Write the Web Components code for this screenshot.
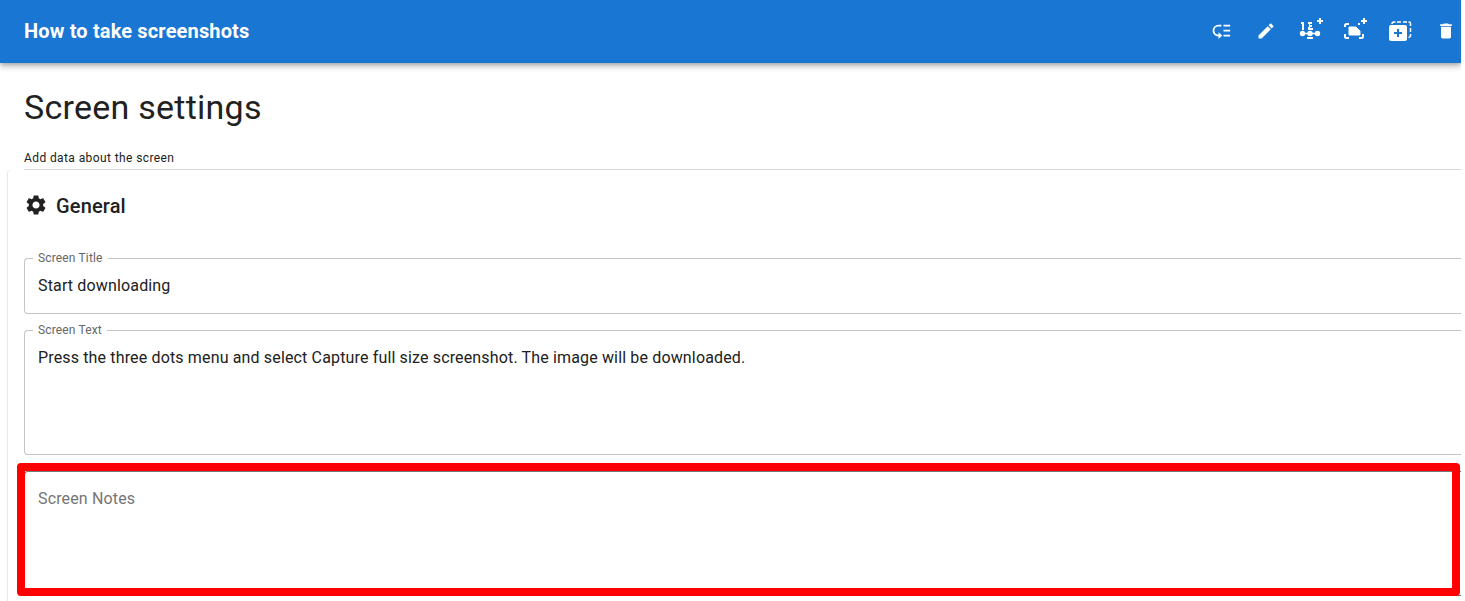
<!DOCTYPE html>
<html lang="en">
<head>
<meta charset="utf-8">
<title>How to take screenshots</title>
<style>
html, body { margin: 0; height: 100%; }
body { font-family: Roboto, sans-serif; color: #212121; background: #fff; overflow: hidden; }
</style>
</head>
<body>
<screen-editor></screen-editor>
<script>
const define = (name, html, setup) => customElements.define(name, class extends HTMLElement {
  connectedCallback() {
    if (this.shadowRoot) return;
    const t = document.createElement('template');
    t.innerHTML = html;
    this.attachShadow({ mode: 'open' }).append(t.content.cloneNode(true));
    if (setup) setup(this, this.shadowRoot);
  }
});

define('icon-button', `
<style>
:host { display: block; }
button { display: grid; place-items: center; width: 24px; height: 24px; padding: 0; border: 0; background: none; color: inherit; cursor: pointer; }
::slotted(svg) { display: block; width: 24px; height: 24px; fill: currentColor; overflow: visible; }
:host([small]) ::slotted(svg) { width: 20px; height: 20px; }
</style>
<button type="button"><slot></slot></button>`, (el, root) => {
  root.querySelector('button').setAttribute('aria-label', el.getAttribute('label'));
});

define('app-bar', `
<style>
:host { display: flex; align-items: center; justify-content: space-between; height: 63px; box-sizing: border-box; padding: 0 3px 2px 24px;
  background: #1976d2; color: #fff; position: relative; clip-path: inset(0 0 -20px 0);
  box-shadow: 0 2px 4px -1px rgba(0,0,0,.2), 0 4px 5px rgba(0,0,0,.14), 0 1px 10px rgba(0,0,0,.12); }
h1 { margin: 0; font-size: 20px; line-height: 32px; font-weight: 700; letter-spacing: .15px; }
nav { display: flex; gap: 21px; }
</style>
<h1><slot></slot></h1>
<nav><slot name="actions"></slot></nav>`);

define('page-heading', `
<style>
:host { display: block; margin-left: 24px; padding-top: 23px; border-bottom: 1px solid #dadada; }
h2 { margin: 0; font-size: 34px; line-height: 42px; font-weight: 400; letter-spacing: .25px; }
p { margin: 0; padding: 20px 0 1px; font-size: 12px; line-height: 20px; letter-spacing: .4px; }
</style>
<h2><slot></slot></h2>
<p><slot name="hint"></slot></p>`);

define('settings-card', `
<style>
:host { display: block; margin-left: 8px; padding: 24px 0 32px 16px; border-radius: 4px 0 0 0; box-shadow: -1px 0 1px rgba(0,0,0,.1); }
h3 { display: flex; align-items: center; gap: 8px; margin: 0 0 40px; font-size: 20px; line-height: 24px; font-weight: 500; letter-spacing: .15px; }
svg { width: 24px; height: 24px; fill: currentColor; }
.fields { display: grid; gap: 16px; }
</style>
<h3><svg viewBox="0 1 24 24" aria-hidden="true"><path d="M19.14 12.94c.04-.3.06-.61.06-.94 0-.32-.02-.64-.07-.94l2.03-1.58c.18-.14.23-.41.12-.61l-1.92-3.32c-.12-.22-.37-.29-.59-.22l-2.39.96c-.5-.38-1.03-.7-1.62-.94l-.36-2.54c-.04-.24-.24-.41-.48-.41h-3.84c-.24 0-.43.17-.47.41l-.36 2.54c-.59.24-1.13.57-1.62.94l-2.39-.96c-.22-.08-.47 0-.59.22L2.74 8.87c-.12.21-.08.47.12.61l2.03 1.58c-.05.3-.09.63-.09.94s.02.64.07.94l-2.03 1.58c-.18.14-.23.41-.12.61l1.92 3.32c.12.22.37.29.59.22l2.39-.96c.5.38 1.03.7 1.62.94l.36 2.54c.05.24.24.41.48.41h3.84c.24 0 .44-.17.47-.41l.36-2.54c.59-.24 1.13-.56 1.62-.94l2.39.96c.22.08.47 0 .59-.22l1.92-3.32c.12-.22.07-.47-.12-.61l-2.01-1.58zM12 15.6c-1.98 0-3.6-1.62-3.6-3.6s1.62-3.6 3.6-3.6 3.6 1.62 3.6 3.6-1.62 3.6-3.6 3.6z"/></svg><slot name="title"></slot></h3>
<div class="fields"><slot></slot></div>`);

define('outlined-field', `
<style>
:host { display: block; position: relative; }
:host([highlight]) .box { border-color: #777; }
:host([highlight])::after { content: ""; position: absolute; inset: -8px 1px 0 -7px; border: 8px solid #f00; border-radius: 4px; pointer-events: none; }
.box { box-sizing: border-box; display: flex; border: 1px solid #c4c4c4; border-right: 0; border-radius: 4px 0 0 4px; }
label { position: absolute; left: 9px; top: -10px; padding: 0 5px; background: #fff; color: #666; font-size: 12px; line-height: 20px; letter-spacing: .15px; }
input, textarea { flex: 1; min-width: 0; box-sizing: border-box; margin: 0; padding: 15px 13px; border: 0; outline: 0; background: none; resize: none; overflow: hidden;
  font: 400 16px/24px Roboto, sans-serif; letter-spacing: .15px; color: #212121; }
input { height: 54px; padding: 0 13px 2px; }
textarea { height: 123px; }
::placeholder { color: #757575; opacity: 1; }
</style>
<div class="box"></div>`, (el, root) => {
  const control = document.createElement(el.hasAttribute('multiline') ? 'textarea' : 'input');
  control.id = 'control';
  control.value = el.getAttribute('value') || '';
  if (control.value) {
    const label = document.createElement('label');
    label.htmlFor = 'control';
    label.textContent = el.getAttribute('label');
    root.append(label);
  } else {
    control.placeholder = el.getAttribute('label');
    control.setAttribute('aria-label', el.getAttribute('label'));
  }
  root.querySelector('.box').append(control);
});

define('screen-editor', `
<style>
:host { display: block; padding-right: 4px; }
</style>
<app-bar>How to take screenshots
  <icon-button small slot="actions" label="Reorder"><svg viewBox="-1 0 24 24"><path d="M14 4.500h8v2.200h-8zM14 10.500h8v2.200h-8zM14 16.500h8v2.200h-8z"/><path d="M11.500 5.500H8a6 6 0 0 0 0 12H9" fill="none" stroke="currentColor" stroke-width="2.200"/><path d="M8 13.500l4.500 4L8 21.500z"/></svg></icon-button>
  <icon-button small slot="actions" label="Edit"><svg viewBox="0 0 24 24"><path d="M3 17.250V21h3.750L17.810 9.940l-3.750-3.750L3 17.250zM20.710 7.040c.39-.39.39-1.020 0-1.410l-2.340-2.340c-.39-.39-1.020-.39-1.410 0l-1.830 1.830 3.750 3.750 1.830-1.830z"/></svg></icon-button>
  <icon-button slot="actions" label="Add step"><svg viewBox="0 0 24 24"><path d="M2 3h3v8H3V5H2zM9 3h4v2h-2v1h2v2h-2v1h3v2H9V8h1V5H9zM3 13.700h17v1.600H3zM8 18h6v2H8z"/><path d="M18 1h6v2h-6z"/><path d="M20-1h2v6h-2z"/><circle cx="3.500" cy="14.500" r="2.700"/><circle cx="11" cy="14.500" r="2.700"/><circle cx="18.500" cy="14.500" r="2.700"/></svg></icon-button>
  <icon-button slot="actions" label="Add screen"><svg viewBox="0 0 24 24"><path d="M5 8h7l4 4v4H5z" stroke="currentColor" stroke-linejoin="round"/><path d="M1 8V6.500q0-1.500 1.500-1.500H5M1 15v2.500Q1 19 2.500 19H5M15 19h2.500q1.500 0 1.500-1.500V15" fill="none" stroke="currentColor" stroke-width="2"/><path d="M17 1h6v2h-6zM19-1h2v6h-2zM14 4h2v2h-2z"/></svg></icon-button>
  <icon-button slot="actions" label="Duplicate"><svg viewBox="0 0 24 24"><path fill-rule="evenodd" d="M2 6h14q2 0 2 2v12q0 2-2 2H2q-2 0-2-2V8q0-2 2-2zm6 4v3H5v2h3v3h2v-3h3v-2h-3v-3z"/><path d="M3 5q0-2 2-2h1.500M8 3h4M14 3h4M19.500 3h.5q1.500 0 1.500 1.500V7M21.500 9v4M21.500 15v2q0 1-2 1.500" fill="none" stroke="currentColor" stroke-width="1.500"/></svg></icon-button>
  <icon-button small slot="actions" label="Delete"><svg viewBox="0 0 24 24"><path d="M6 19c0 1.100.9 2 2 2h8c1.100 0 2-.9 2-2V7H6v12zM19 4h-3.500l-1-1h-5l-1 1H5v2h14V4z"/></svg></icon-button>
</app-bar>
<main>
  <page-heading>Screen settings<span slot="hint">Add data about the screen</span></page-heading>
  <settings-card>
    <span slot="title">General</span>
    <outlined-field label="Screen Title" value="Start downloading"></outlined-field>
    <outlined-field multiline label="Screen Text" value="Press the three dots menu and select Capture full size screenshot. The image will be downloaded."></outlined-field>
    <outlined-field multiline highlight label="Screen Notes"></outlined-field>
  </settings-card>
</main>`);
</script>
</body>
</html>
